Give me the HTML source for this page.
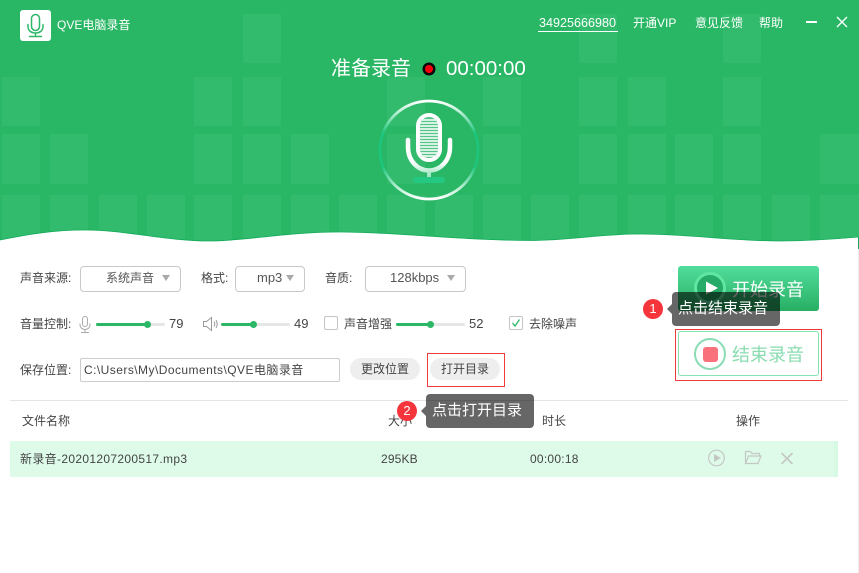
<!DOCTYPE html>
<html lang="zh"><head><meta charset="utf-8"><title>QVE电脑录音</title>
<style>
html,body{margin:0;padding:0;background:#fff}
#p{position:relative;width:859px;height:573px;overflow:hidden;background:#fff;font:12px "Liberation Sans","Noto Sans CJK SC",sans-serif;color:#444}
#p div,#p span.a{position:absolute;white-space:nowrap}
.t{height:18px;line-height:18px}
.sel{border:1px solid #c8c8c8;border-radius:4px;box-sizing:border-box;height:26px;top:266px;background:#fff}
.arr{width:0;height:0;border-left:4.5px solid transparent;border-right:4.5px solid transparent;border-top:6px solid #aaa;top:275px}
.tr{height:3px;background:#e6e6e6;top:323px;border-radius:2px}
.fi{height:3px;background:#2ab866;top:323px;border-radius:2px}
.h{width:7px;height:7px;border-radius:50%;background:#2ab866;top:321px}
.cb{width:14px;height:14px;box-sizing:border-box;border:1px solid #c4c4c4;border-radius:2px;top:316px;background:#fff}
.btn{height:22px;line-height:22px;top:358px;width:70px;border-radius:11px;background:#eee;text-align:center;color:#444}
.tip{width:102px;padding-left:6px;height:34px;line-height:34px;background:rgba(0,0,0,.6);border-radius:4px;color:#fff;font-size:15px;text-align:left}
.ar{width:0;height:0;border-top:5px solid transparent;border-bottom:5px solid transparent;border-right:5px solid rgba(0,0,0,.6)}
.bd{width:20px;height:20px;line-height:20px;border-radius:50%;background:#f6343c;color:#fff;text-align:center;font-size:13px}
.rb{border:1px solid #ee3a3a;box-sizing:border-box}
</style></head><body><div id="p">

<svg width="859" height="260" style="position:absolute;left:0;top:0" viewBox="0 0 859 260">
<defs>
<clipPath id="w"><path d="M0 240C30 234 55 230 85 230C125 230 165 241 210 241C245 241 285 232 340 232C395 232 455 240 530 240.500C570 240.500 600 234 640 234C690 234 730 241 780 241C810 241 835 239 859 237V0H0Z"/></clipPath>
<linearGradient id="ring" x1="0" y1="0" x2="0" y2="1"><stop offset="0" stop-color="#fff"/><stop offset=".12" stop-color="#b5eed2"/><stop offset=".33" stop-color="#1cc57b"/><stop offset=".67" stop-color="#1cc57b"/><stop offset=".88" stop-color="#b5eed2"/><stop offset="1" stop-color="#fff"/></linearGradient>
<linearGradient id="yoke" gradientUnits="userSpaceOnUse" x1="0" y1="145" x2="0" y2="174"><stop offset="0" stop-color="#fff"/><stop offset=".6" stop-color="#fff"/><stop offset="1" stop-color="#a5e8c8"/></linearGradient>
</defs>
<g clip-path="url(#w)">
<rect width="859" height="260" fill="#29b765"/>
<g fill="#32bb6c">
<rect x="243" y="14" width="38" height="49"/><rect x="579" y="14" width="38" height="49"/><rect x="723" y="14" width="38" height="49"/>
<rect x="2" y="77" width="38" height="49"/><rect x="194" y="77" width="38" height="49"/><rect x="243" y="77" width="38" height="49"/><rect x="387" y="77" width="38" height="49"/><rect x="483" y="77" width="38" height="49"/><rect x="579" y="77" width="38" height="49"/><rect x="628" y="77" width="38" height="49"/><rect x="723" y="77" width="38" height="49"/>
<rect x="2" y="134" width="38" height="50"/><rect x="50" y="134" width="38" height="50"/><rect x="194" y="134" width="38" height="50"/><rect x="243" y="134" width="38" height="50"/><rect x="291" y="134" width="38" height="50"/><rect x="387" y="134" width="38" height="50"/><rect x="483" y="134" width="38" height="50"/><rect x="579" y="134" width="38" height="50"/><rect x="628" y="134" width="38" height="50"/><rect x="675" y="134" width="38" height="50"/><rect x="723" y="134" width="38" height="50"/><rect x="820" y="134" width="39" height="50"/>
<rect x="2" y="195" width="38" height="50"/><rect x="50" y="195" width="38" height="50"/><rect x="99" y="195" width="38" height="50"/><rect x="147" y="195" width="38" height="50"/><rect x="194" y="195" width="38" height="50"/><rect x="243" y="195" width="38" height="50"/><rect x="291" y="195" width="38" height="50"/><rect x="339" y="195" width="38" height="50"/><rect x="387" y="195" width="38" height="50"/><rect x="435" y="195" width="38" height="50"/><rect x="483" y="195" width="38" height="50"/><rect x="531" y="195" width="38" height="50"/><rect x="579" y="195" width="38" height="50"/><rect x="628" y="195" width="38" height="50"/><rect x="675" y="195" width="38" height="50"/><rect x="723" y="195" width="38" height="50"/><rect x="772" y="195" width="38" height="50"/><rect x="820" y="195" width="39" height="50"/>
</g>
</g>
<path d="M0 240C30 234 55 230 85 230C125 230 165 241 210 241C245 241 285 232 340 232C395 232 455 240 530 240.500C570 240.500 600 234 640 234C690 234 730 241 780 241C810 241 835 239 859 237" fill="none" stroke="#12ab5c" stroke-width=".8"/>
<circle cx="429" cy="150" r="49" fill="none" stroke="url(#ring)" stroke-width="2.800"/>
<rect x="418" y="115" width="22" height="45" rx="11" fill="#56c488" stroke="#fff" stroke-width="4"/>
<path d="M420 120H438M420 123H438M420 126H438M420 129H438M420 132H438M420 135H438M420 138H438M420 141H438M420 144H438M420 147H438M420 150H438M420 153H438M420 156H438" stroke="#e9f8f0" stroke-width="1.800"/>
<path d="M408 140V147C408 160 417 170.500 429 170.500C441 170.500 450 160 450 147V140" fill="none" stroke="url(#yoke)" stroke-width="4.500" stroke-linecap="round"/>
<rect x="427" y="172" width="4" height="6" fill="#a5e8c8"/>
<rect x="413" y="177" width="32" height="6" rx="3" fill="#25c880"/>
<circle cx="429" cy="69" r="6.500" fill="#0a0a0a"/><circle cx="429" cy="69" r="4" fill="#f5000f"/>
</svg>

<div style="left:20px;top:10px;width:31px;height:31px;background:#fff;border-radius:3px"></div>
<svg width="31" height="31" style="position:absolute;left:20px;top:10px" viewBox="0 0 31 31" fill="none" stroke="#2eb86a" stroke-width="1.500"><rect x="11.500" y="4.500" width="8" height="16" rx="4"/><path d="M8 14.500V16.500C8 20.500 11 23 15.500 23C20 23 23 20.500 23 16.500V14.500M15.500 23V26M9.500 26.500H21.500" stroke-linecap="round"/></svg>
<div class="t" style="left:57px;top:16px;color:#fff">QVE电脑录音</div>

<div class="t" style="left:539px;top:14px;color:#fff;font-size:12.600px">34925666980</div>
<div style="left:538px;top:31px;width:80px;height:1px;background:#fff"></div>
<div class="t" style="left:633px;top:14px;color:#fff">开通VIP</div>
<div class="t" style="left:695px;top:14px;color:#fff">意见反馈</div>
<div class="t" style="left:759px;top:14px;color:#fff">帮助</div>
<div style="left:806px;top:21px;width:11px;height:2px;background:#fff"></div>
<svg width="12" height="12" style="position:absolute;left:836px;top:16px" viewBox="0 0 12 12"><path d="M1 1L11 11M11 1L1 11" stroke="#fff" stroke-width="1.300"/></svg>

<div style="left:331px;top:55px;height:28px;line-height:28px;font-size:20px;color:#fff">准备录音</div>
<div style="left:446px;top:55px;height:28px;line-height:28px;font-size:20.500px;color:#fff">00:00:00</div>

<div class="t" style="left:20px;top:269px">声音来源:</div>
<div class="sel" style="left:80px;width:101px"></div>
<div class="t" style="left:106px;top:269px;color:#555">系统声音</div>
<div class="arr" style="left:162px"></div>
<div class="t" style="left:201px;top:269px">格式:</div>
<div class="sel" style="left:235px;width:70px"></div>
<div class="t" style="left:257px;top:269px;color:#555;font-size:13px">mp3</div>
<div class="arr" style="left:285.500px"></div>
<div class="t" style="left:325px;top:269px">音质:</div>
<div class="sel" style="left:365px;width:101px"></div>
<div class="t" style="left:390px;top:269px;color:#555;font-size:13px">128kbps</div>
<div class="arr" style="left:447px"></div>

<div class="t" style="left:20px;top:315px">音量控制:</div>
<svg width="14" height="19" style="position:absolute;left:78px;top:315px" viewBox="0 0 14 19" fill="none" stroke="#aaa" stroke-width="1"><rect x="4.500" y="1.500" width="5" height="10" rx="2.500"/><path d="M2 8.500V9.500C2 12.500 4 14.500 7 14.500C10 14.500 12 12.500 12 9.500V8.500M7 14.500V17.500M3 17.500H11"/></svg>
<div class="tr" style="left:96px;width:69px"></div><div class="fi" style="left:96px;width:51px"></div><div class="h" style="left:144px"></div>
<div class="t" style="left:169px;top:315px;font-size:13px">79</div>
<svg width="16" height="16" style="position:absolute;left:203px;top:316px" viewBox="0 0 16 16" fill="none" stroke="#999" stroke-width="1"><path d="M.5 5.500H3.500L8.500 1.500V14.500L3.500 10.500H.5ZM11 5.500C12 7 12 9 11 10.500M13 4C14.500 6.500 14.500 9.500 13 12"/></svg>
<div class="tr" style="left:221px;width:69px"></div><div class="fi" style="left:221px;width:33px"></div><div class="h" style="left:250px"></div>
<div class="t" style="left:294px;top:315px;font-size:13px">49</div>
<div class="cb" style="left:324px"></div>
<div class="t" style="left:344px;top:315px">声音增强</div>
<div class="tr" style="left:396px;width:69px"></div><div class="fi" style="left:396px;width:35px"></div><div class="h" style="left:427px"></div>
<div class="t" style="left:469px;top:315px;font-size:13px">52</div>
<div class="cb" style="left:509px"></div>
<svg width="14" height="14" style="position:absolute;left:509px;top:316px" viewBox="0 0 14 14"><path d="M3.500 7L6 10L10.500 3.500" fill="none" stroke="#2ab866" stroke-width="1.300"/></svg>
<div class="t" style="left:529px;top:315px">去除噪声</div>

<div class="t" style="left:20px;top:361px">保存位置:</div>
<div style="left:80px;top:358px;width:260px;height:24px;box-sizing:border-box;border:1px solid #ccc;border-radius:2px"></div>
<div class="t" style="left:84px;top:361px;letter-spacing:.450px">C:\Users\My\Documents\QVE电脑录音</div>
<div class="btn" style="left:350px">更改位置</div>
<div class="btn" style="left:430px">打开目录</div>
<div class="rb" style="left:427px;top:353px;width:78px;height:34px"></div>

<div style="left:10px;top:400px;width:838px;height:1px;background:#e4e4e4"></div>
<div class="t" style="left:22px;top:412px">文件名称</div>
<div class="t" style="left:388px;top:412px">大小</div>
<div class="t" style="left:542px;top:412px">时长</div>
<div class="t" style="left:736px;top:412px">操作</div>

<div style="left:10px;top:441px;width:828px;height:36px;background:#defbea"></div>
<div style="left:834px;top:441px;width:4px;height:36px;background:#d6fae4"></div>
<div class="t" style="left:20px;top:450px;letter-spacing:.330px">新录音-20201207200517.mp3</div>
<div class="t" style="left:381px;top:450px;letter-spacing:.150px">295KB</div>
<div class="t" style="left:530px;top:450px;letter-spacing:.250px">00:00:18</div>
<svg width="100" height="24" style="position:absolute;left:700px;top:446px" viewBox="0 0 100 24" fill="none" stroke="#c4c8c5" stroke-width="1.200">
<circle cx="16.500" cy="12" r="7.800"/><path d="M14 8L21 12L14 16Z" fill="#c4c8c5" stroke="none"/>
<path d="M45.500 17.500V5.500H50.500L52 7.500H59.500V10M45.500 17.500H58L61 10H48.500L45.500 17.500Z"/>
<path d="M81.500 7L92.500 18M92.500 7L81.500 18" stroke-width="1.600"/>
</svg>

<div style="left:678px;top:266px;width:141px;height:45px;border-radius:3px;background:linear-gradient(#52dd9c,#27b063)"></div>
<div style="left:694px;top:272px;width:32px;height:32px;box-sizing:border-box;border:3px solid #5fe6a0;border-radius:50%;background:#27ab68"></div>
<svg width="14" height="16" style="position:absolute;left:706px;top:280px"><path d="M0 1.500L12 8L0 14.500Z" fill="#fff"/></svg>
<div style="left:732px;top:277px;height:26px;line-height:26px;font-size:18px;color:#fff">开始录音</div>

<div style="left:678px;top:331px;width:141px;height:45px;box-sizing:border-box;border:1.500px solid #85e3b4;border-radius:3px"></div>
<div style="left:694px;top:338px;width:32px;height:32px;box-sizing:border-box;border:2.500px solid #8adcb4;border-radius:50%"></div>
<div style="left:703px;top:347px;width:15px;height:15px;border-radius:3px;background:#f8717b"></div>
<div style="left:732px;top:342px;height:26px;line-height:26px;font-size:18px;color:#8adcb0">结束录音</div>
<div class="rb" style="left:675px;top:329px;width:147px;height:52px"></div>

<div class="bd" style="left:643px;top:299px">1</div>
<div class="ar" style="left:667px;top:304px"></div>
<div class="tip" style="left:672px;top:292px">点击结束录音</div>

<div class="bd" style="left:397px;top:401px">2</div>
<div class="ar" style="left:421px;top:406px"></div>
<div class="tip" style="left:426px;top:394px">点击打开目录</div>

<div style="left:858px;top:237px;width:1px;height:12px;background:#14ad5e"></div>
<div style="left:858px;top:249px;width:1px;height:324px;background:#eee"></div>
</div></body></html>
